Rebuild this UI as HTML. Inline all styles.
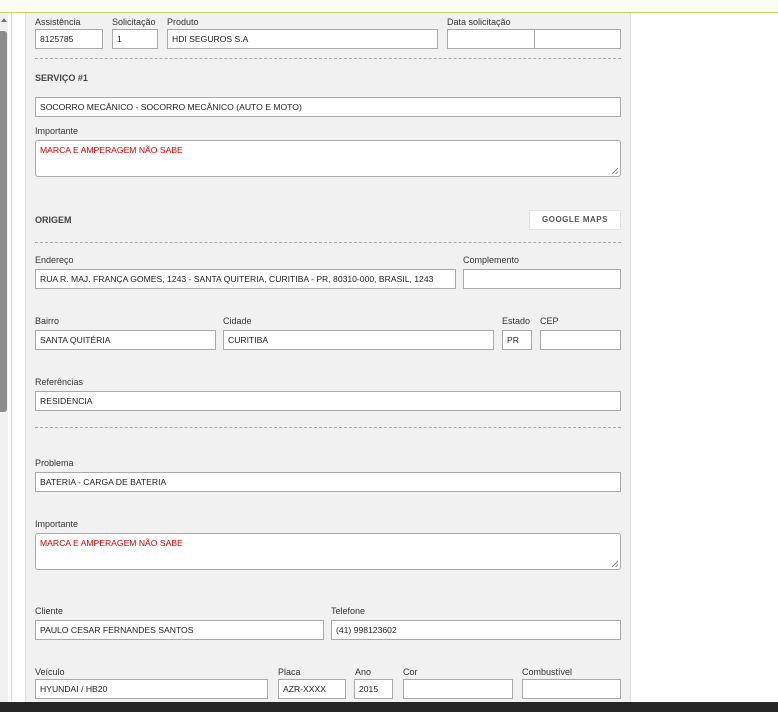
<!DOCTYPE html>
<html><head><meta charset="utf-8"><style>
*{box-sizing:border-box;margin:0;padding:0}
body{width:778px;height:712px;overflow:hidden;background:#fff;position:relative;font-family:"Liberation Sans",sans-serif;font-size:9px;color:#333}
.top{position:absolute;left:0;top:0;width:778px;height:13px;background:#fbfbf5;border-bottom:1px solid #c8d460}
.sb{position:absolute;left:0;top:13px;width:8px;height:689px;background:#f0f0f0}
.thumb{position:absolute;left:0;top:18px;width:7px;height:381px;background:#8c8c8c;border-radius:0 3px 3px 0}
.arr{position:absolute;left:1px;top:18px;width:0;height:0;border-left:3px solid transparent;border-right:3px solid transparent;border-bottom:4px solid #777}
.vl{position:absolute;left:11px;top:13px;width:1px;height:689px;background:#e6e2cf}
.panel{position:absolute;left:25px;top:13px;width:606px;height:689px;background:#f1f1f1;border-left:1px solid #e2e2e2;border-right:1px solid #e2e2e2}
.l{position:absolute;font-size:9px;color:#333;white-space:nowrap;margin-top:1px}
.i{position:absolute;height:20px;background:#fff;border:1px solid #a9a9a9;padding:0 4px;line-height:18px;font-size:8.6px;color:#222;white-space:nowrap;overflow:hidden}
.t{position:absolute;height:37px;background:#fff;border:1px solid #a9a9a9;border-radius:3px;padding:4px 4px;font-size:8.6px;color:#d40000}
.t:after{content:"";position:absolute;right:2px;bottom:2px;width:6px;height:6px;background:linear-gradient(135deg,transparent 45%,#888 45%,#888 55%,transparent 55%,transparent 75%,#888 75%,#888 85%,transparent 85%)}
.d{position:absolute;left:35px;width:586px;border-top:1px dashed #aaa;height:0}
.h{position:absolute;font-weight:bold;font-size:9px;color:#444}
.btn{position:absolute;left:529px;top:210px;width:92px;height:20px;background:#fff;border:1px solid #e0e0e0;font-weight:bold;font-size:8px;letter-spacing:.5px;color:#555;text-align:center;line-height:18px}
.bot{position:absolute;left:0;top:702px;width:778px;height:10px;background:#262626}
</style></head><body>
<div class="top"></div>
<div class="sb"><div class="thumb"></div></div><div class="arr"></div>
<div class="vl"></div>
<div class="panel"></div>

<div class="l" style="left:35px;top:16px">Assistência</div>
<div class="l" style="left:112px;top:16px">Solicitação</div>
<div class="l" style="left:167px;top:16px">Produto</div>
<div class="l" style="left:447px;top:16px">Data solicitação</div>
<div class="i" style="left:35px;top:29px;width:68px">8125785</div>
<div class="i" style="left:112px;top:29px;width:46px">1</div>
<div class="i" style="left:167px;top:29px;width:271px">HDI SEGUROS S.A</div>
<div class="i" style="left:447px;top:29px;width:88px"></div>
<div class="i" style="left:534px;top:29px;width:87px"></div>
<div class="d" style="top:58px"></div>

<div class="h" style="left:35px;top:73px">SERVIÇO #1</div>
<div class="i" style="left:35px;top:97px;width:586px">SOCORRO MECÂNICO - SOCORRO MECÂNICO (AUTO E MOTO)</div>
<div class="l" style="left:35px;top:125px">Importante</div>
<div class="t" style="left:35px;top:140px;width:586px">MARCA E AMPERAGEM NÃO SABE</div>

<div class="h" style="left:35px;top:215px">ORIGEM</div>
<div class="btn">GOOGLE MAPS</div>
<div class="d" style="top:242px"></div>

<div class="l" style="left:35px;top:254px">Endereço</div>
<div class="l" style="left:463px;top:254px">Complemento</div>
<div class="i" style="left:35px;top:269px;width:421px">RUA R. MAJ. FRANÇA GOMES, 1243 - SANTA QUITERIA, CURITIBA - PR, 80310-000, BRASIL, 1243</div>
<div class="i" style="left:463px;top:269px;width:158px"></div>

<div class="l" style="left:35px;top:315px">Bairro</div>
<div class="l" style="left:223px;top:315px">Cidade</div>
<div class="l" style="left:502px;top:315px">Estado</div>
<div class="l" style="left:540px;top:315px">CEP</div>
<div class="i" style="left:35px;top:330px;width:181px">SANTA QUITÉRIA</div>
<div class="i" style="left:223px;top:330px;width:271px">CURITIBA</div>
<div class="i" style="left:502px;top:330px;width:30px">PR</div>
<div class="i" style="left:540px;top:330px;width:81px"></div>

<div class="l" style="left:35px;top:376px">Referências</div>
<div class="i" style="left:35px;top:391px;width:586px">RESIDENCIA</div>
<div class="d" style="top:427px"></div>

<div class="l" style="left:35px;top:457px">Problema</div>
<div class="i" style="left:35px;top:472px;width:586px">BATERIA - CARGA DE BATERIA</div>
<div class="l" style="left:35px;top:518px">Importante</div>
<div class="t" style="left:35px;top:533px;width:586px">MARCA E AMPERAGEM NÃO SABE</div>

<div class="l" style="left:35px;top:605px">Cliente</div>
<div class="l" style="left:331px;top:605px">Telefone</div>
<div class="i" style="left:35px;top:620px;width:289px">PAULO CESAR FERNANDES SANTOS</div>
<div class="i" style="left:331px;top:620px;width:290px">(41) 998123602</div>

<div class="l" style="left:35px;top:666px">Veículo</div>
<div class="l" style="left:278px;top:666px">Placa</div>
<div class="l" style="left:355px;top:666px">Ano</div>
<div class="l" style="left:403px;top:666px">Cor</div>
<div class="l" style="left:522px;top:666px">Combustível</div>
<div class="i" style="left:35px;top:679px;width:233px">HYUNDAI / HB20</div>
<div class="i" style="left:278px;top:679px;width:68px">AZR-XXXX</div>
<div class="i" style="left:354px;top:679px;width:39px">2015</div>
<div class="i" style="left:403px;top:679px;width:110px"></div>
<div class="i" style="left:522px;top:679px;width:99px"></div>

<div class="bot"></div>
</body></html>
